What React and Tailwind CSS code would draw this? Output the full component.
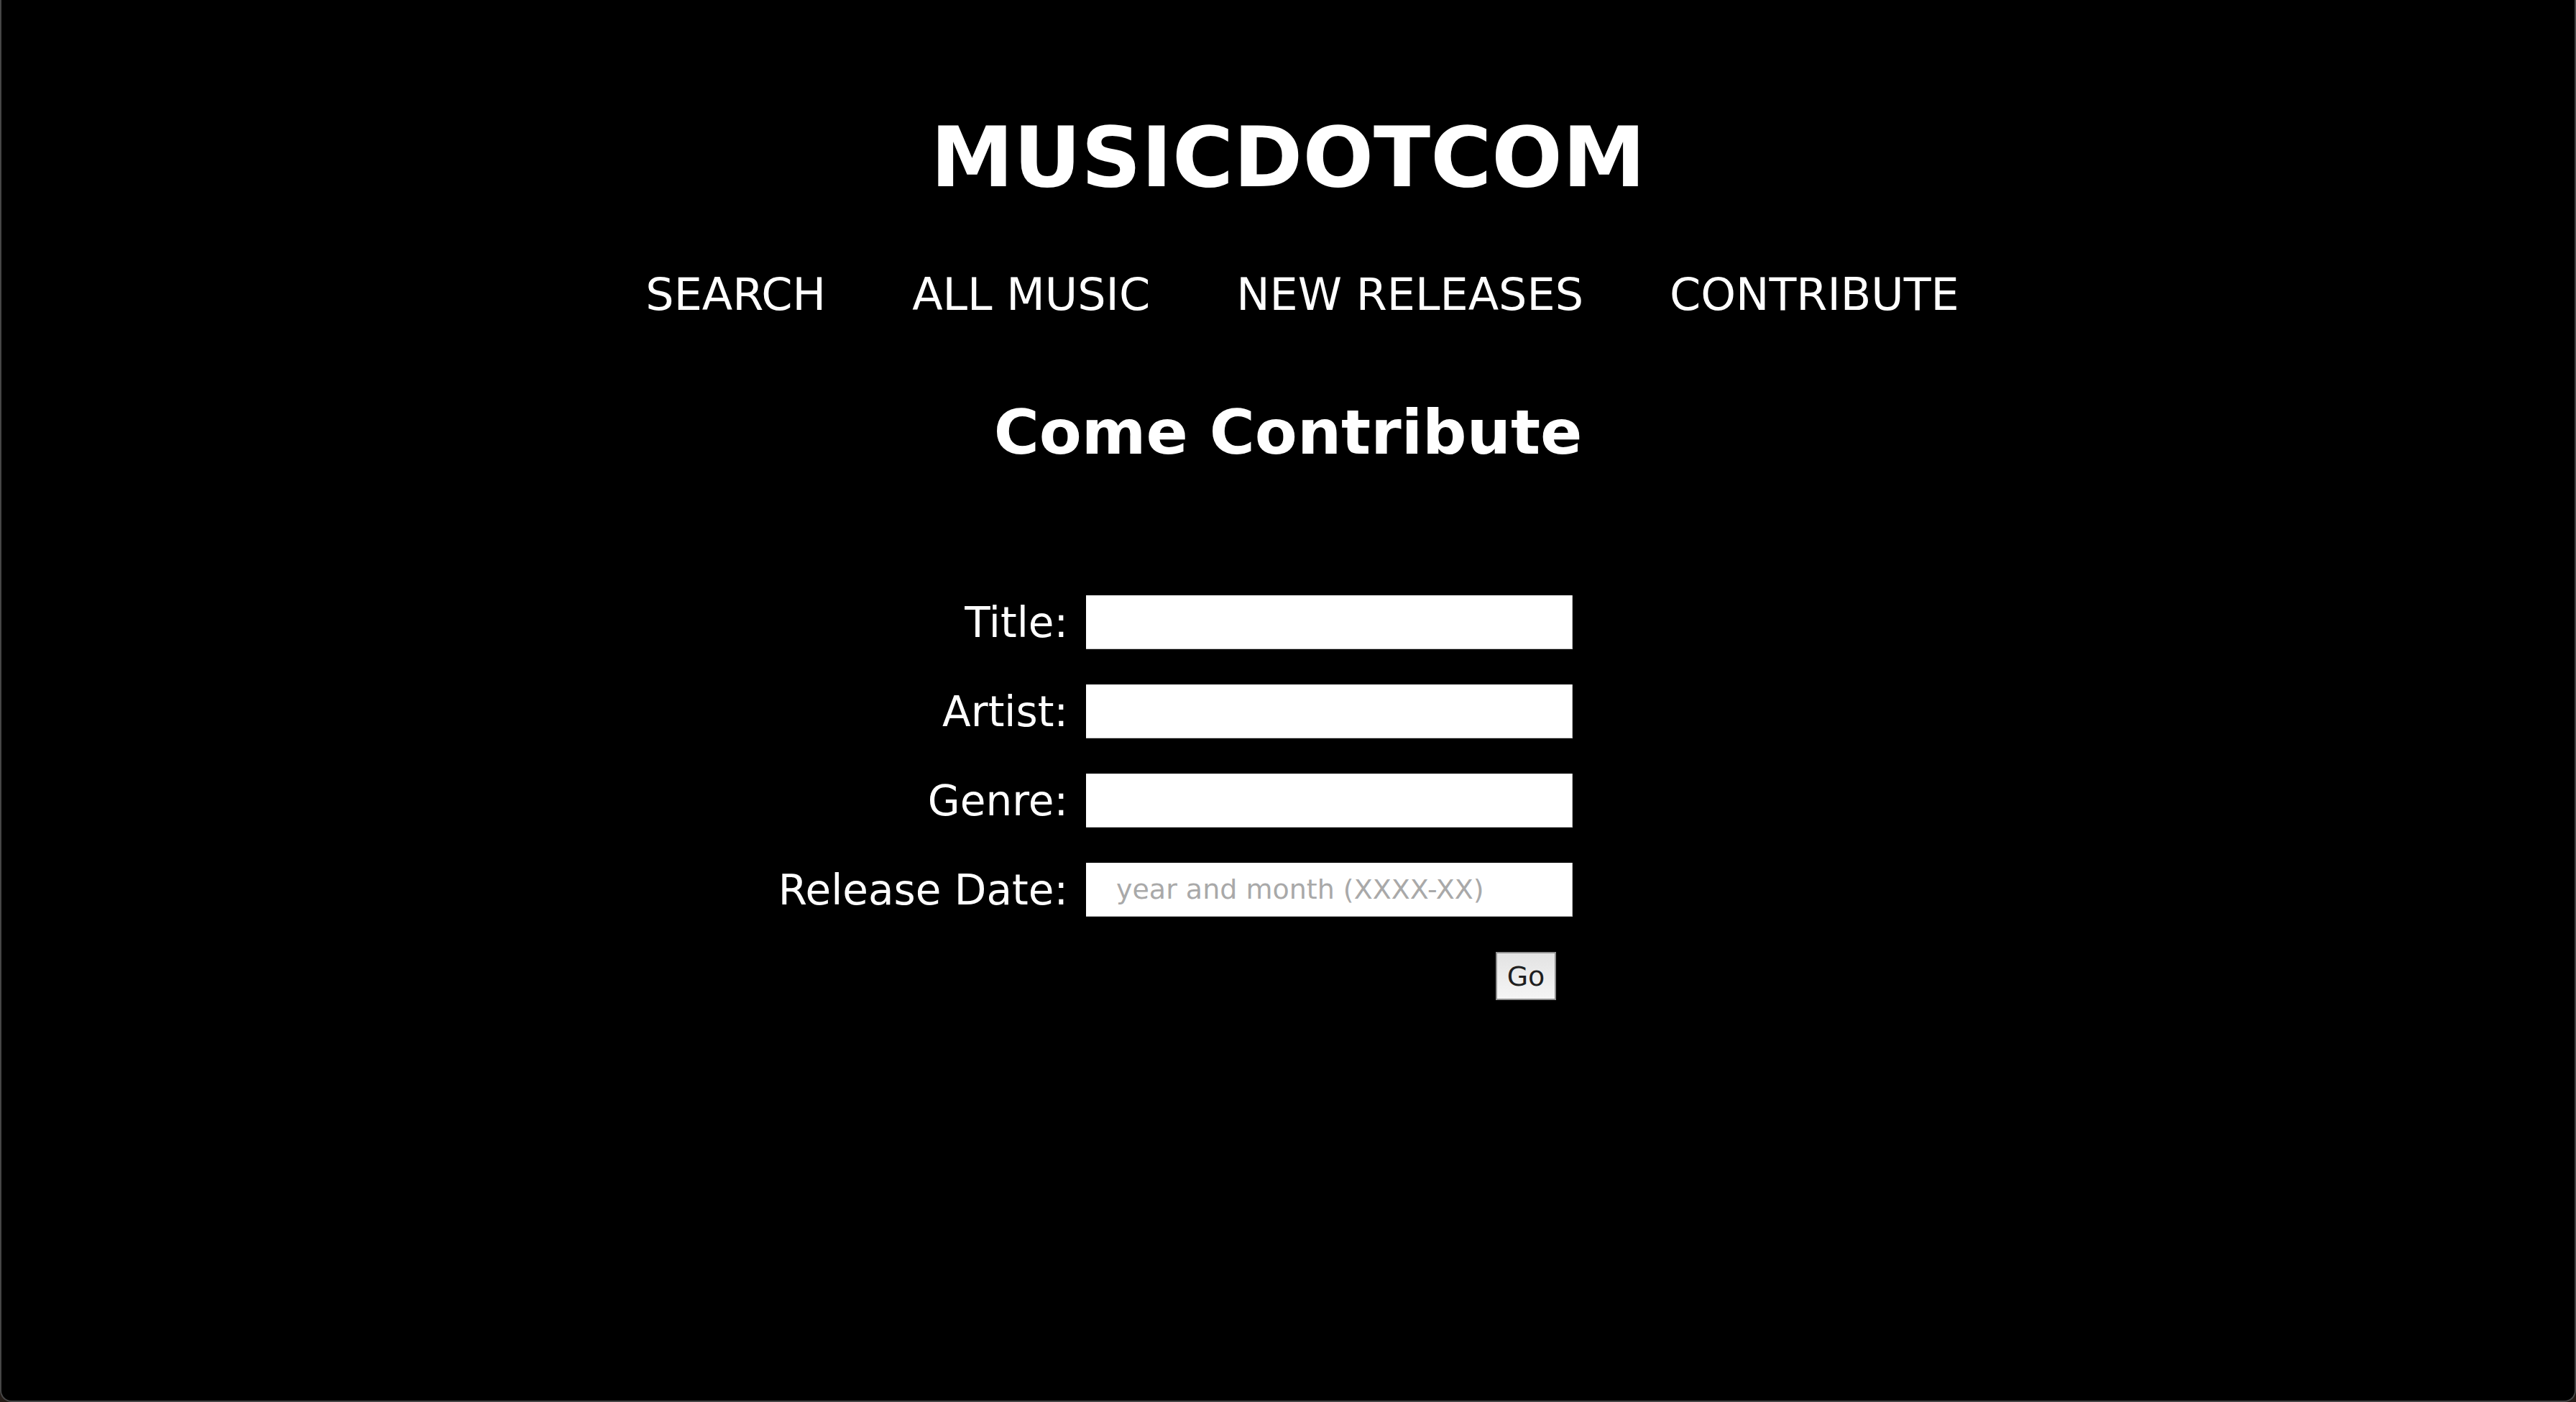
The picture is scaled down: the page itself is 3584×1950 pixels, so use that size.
import React from 'react';

const navItems = ['SEARCH', 'ALL MUSIC', 'NEW RELEASES', 'CONTRIBUTE'];
const fields = ['Title:', 'Artist:', 'Genre:'];

const App = () => {
  return (
    <div className="h-screen bg-[#241c17] font-['DejaVu_Sans',sans-serif]">
      <div className="h-full flex flex-col bg-black border-x-2 border-b-2 border-[#464646] rounded-b-[16px] text-white">
        {/* Header */}
        <h1 className="mt-[161px] text-center text-[116px] font-bold leading-none">MUSICDOTCOM</h1>

        <nav className="mt-[102px] flex justify-center gap-[120px] pl-[40px]">
          {navItems.map((item) => (
            <a key={item} href="#" className="text-[62px] leading-none">
              {item}
            </a>
          ))}
        </nav>

        <h2 className="mt-[117px] text-center text-[86px] font-bold leading-none">Come Contribute</h2>

        {/* Contribute form */}
        <div className="mt-[184px] flex justify-center">
          <form className="mr-[330px] grid grid-cols-[420px_677px] gap-x-[25px] gap-y-[49px] items-center">
            {fields.map((label) => (
              <React.Fragment key={label}>
                <label className="text-right text-[58px] leading-none">{label}</label>
                <input
                  type="text"
                  className="h-[75px] bg-white border-b border-r border-[#c4c4c4] text-black text-[38px] pl-[42px] outline-none"
                />
              </React.Fragment>
            ))}
            <label className="text-right text-[58px] leading-none">Release Date:</label>
            <input
              type="text"
              placeholder="year and month (XXXX-XX)"
              className="h-[75px] bg-white border-b border-r border-[#c4c4c4] text-black text-[38px] pl-[42px] outline-none placeholder:text-[#a9a9a9]"
            />
            <div />
            <button
              type="button"
              className="justify-self-end mr-[23px] w-[84px] h-[67px] border-2 border-[#909090] bg-gradient-to-b from-[#e3e3e3] to-[#f5f5f5] text-[#1f1f1f] text-[38px] leading-none"
            >
              Go
            </button>
          </form>
        </div>
      </div>
    </div>
  );
};

export default App;
